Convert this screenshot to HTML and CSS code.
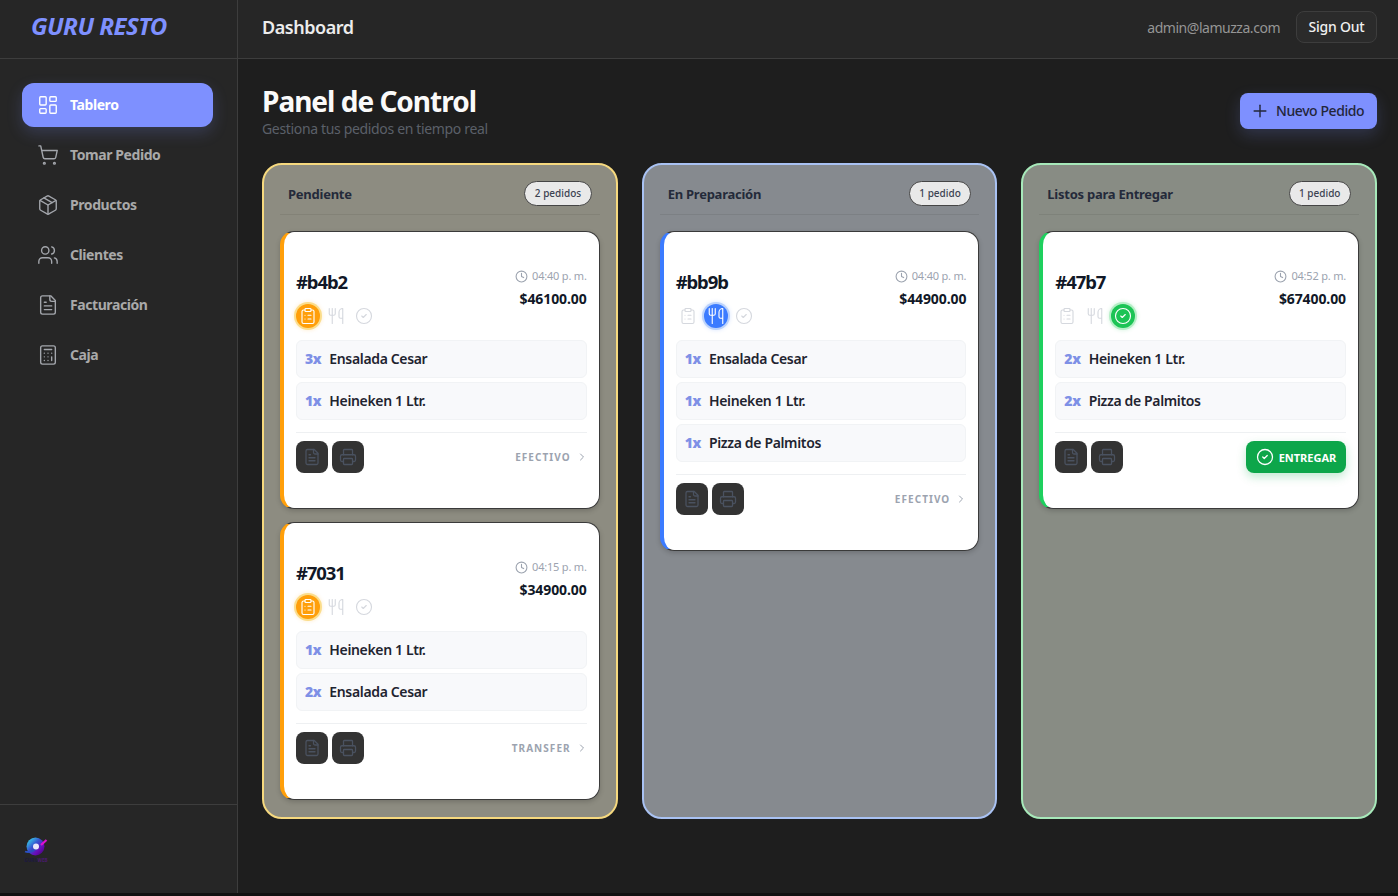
FILE: index.html
```html
<!DOCTYPE html>
<html lang="es">
<head>
    <meta charset="UTF-8">
    <meta name="viewport" content="width=device-width, initial-scale=1.0">
    <title>Guru Resto - Dashboard</title>
    <link rel="stylesheet" href="styles.css">
</head>
<body>

<!-- Iconos -->
<svg class="sprite" xmlns="http://www.w3.org/2000/svg">
    <symbol id="i-tablero" viewBox="0 0 24 24"><rect x="3" y="3" width="7" height="9" rx="1"/><rect x="14" y="3" width="7" height="5" rx="1"/><rect x="14" y="12" width="7" height="9" rx="1"/><rect x="3" y="16" width="7" height="5" rx="1"/></symbol>
    <symbol id="i-cart" viewBox="0 0 24 24"><circle cx="8" cy="21" r="1"/><circle cx="19" cy="21" r="1"/><path d="M2.05 2.05h2l2.66 12.42a2 2 0 0 0 2 1.58h9.78a2 2 0 0 0 1.95-1.57l1.65-7.43H5.12"/></symbol>
    <symbol id="i-package" viewBox="0 0 24 24"><path d="M11 21.73a2 2 0 0 0 2 0l7-4A2 2 0 0 0 21 16V8a2 2 0 0 0-1-1.73l-7-4a2 2 0 0 0-2 0l-7 4A2 2 0 0 0 3 8v8a2 2 0 0 0 1 1.73z"/><path d="M12 22V12"/><path d="M3.29 7 12 12l8.71-5"/><path d="m7.5 4.27 9 5.15"/></symbol>
    <symbol id="i-users" viewBox="0 0 24 24"><path d="M16 21v-2a4 4 0 0 0-4-4H6a4 4 0 0 0-4 4v2"/><circle cx="9" cy="7" r="4"/><path d="M22 21v-2a4 4 0 0 0-3-3.87"/><path d="M16 3.13a4 4 0 0 1 0 7.75"/></symbol>
    <symbol id="i-file" viewBox="0 0 24 24"><path d="M15 2H6a2 2 0 0 0-2 2v16a2 2 0 0 0 2 2h12a2 2 0 0 0 2-2V7Z"/><path d="M14 2v4a2 2 0 0 0 2 2h4"/><path d="M10 9H8"/><path d="M16 13H8"/><path d="M16 17H8"/></symbol>
    <symbol id="i-calc" viewBox="0 0 24 24"><rect x="4" y="2" width="16" height="20" rx="2"/><path d="M8 6h8"/><path d="M16 14v4"/><path d="M16 10h.01"/><path d="M12 10h.01"/><path d="M8 10h.01"/><path d="M12 14h.01"/><path d="M8 14h.01"/><path d="M12 18h.01"/><path d="M8 18h.01"/></symbol>
    <symbol id="i-clipboard" viewBox="0 0 24 24"><rect x="8" y="2" width="8" height="4" rx="1"/><path d="M16 4h2a2 2 0 0 1 2 2v14a2 2 0 0 1-2 2H6a2 2 0 0 1-2-2V6a2 2 0 0 1 2-2h2"/><path d="M12 11h4"/><path d="M12 16h4"/><path d="M8 11h.01"/><path d="M8 16h.01"/></symbol>
    <symbol id="i-utensils" viewBox="0 0 24 24"><path d="M3 2v7c0 1.1.9 2 2 2h4a2 2 0 0 0 2-2V2"/><path d="M7 2v20"/><path d="M21 15V2a5 5 0 0 0-5 5v6c0 1.1.9 2 2 2h3Zm0 0v7"/></symbol>
    <symbol id="i-check" viewBox="0 0 24 24"><circle cx="12" cy="12" r="10"/><path d="m9 12 2 2 4-4"/></symbol>
    <symbol id="i-clock" viewBox="0 0 24 24"><circle cx="12" cy="12" r="10"/><path d="M12 6v6l4 2"/></symbol>
    <symbol id="i-printer" viewBox="0 0 24 24"><path d="M6 18H4a2 2 0 0 1-2-2v-5a2 2 0 0 1 2-2h16a2 2 0 0 1 2 2v5a2 2 0 0 1-2 2h-2"/><path d="M6 9V3a1 1 0 0 1 1-1h10a1 1 0 0 1 1 1v6"/><rect x="6" y="14" width="12" height="8" rx="1"/></symbol>
    <symbol id="i-chevron" viewBox="0 0 24 24"><path d="m9 18 6-6-6-6"/></symbol>
    <symbol id="i-plus" viewBox="0 0 24 24"><path d="M5 12h14"/><path d="M12 5v14"/></symbol>
</svg>

<div class="app">
    <aside class="sidebar">
        <div class="brand">GURU RESTO</div>
        <nav class="nav">
            <a class="nav-item active"><svg class="icon"><use href="#i-tablero"/></svg>Tablero</a>
            <a class="nav-item"><svg class="icon"><use href="#i-cart"/></svg>Tomar Pedido</a>
            <a class="nav-item"><svg class="icon"><use href="#i-package"/></svg>Productos</a>
            <a class="nav-item"><svg class="icon"><use href="#i-users"/></svg>Clientes</a>
            <a class="nav-item"><svg class="icon"><use href="#i-file"/></svg>Facturación</a>
            <a class="nav-item"><svg class="icon"><use href="#i-calc"/></svg>Caja</a>
        </nav>
        <div class="sidebar-foot">
            <svg class="logo" viewBox="0 0 26 27" xmlns="http://www.w3.org/2000/svg">
                <defs>
                    <linearGradient id="planeta" x1="0.1" y1="0.1" x2="0.9" y2="0.9">
                        <stop offset="0" stop-color="#38d0e8"/>
                        <stop offset="0.4" stop-color="#3555d0"/>
                        <stop offset="0.75" stop-color="#6a0ab8"/>
                        <stop offset="1" stop-color="#4a0680"/>
                    </linearGradient>
                </defs>
                <circle cx="11.5" cy="10.5" r="9" fill="url(#planeta)"/>
                <path d="M1 15.5c4 1.5 9-.5 11-4" fill="none" stroke="#2a50c0" stroke-width="1.8"/>
                <path d="M17 9l5.5-5" stroke="#e010d0" stroke-width="2.2"/>
                <circle cx="12" cy="10.5" r="3" fill="#ebe6f8"/>
                <text class="logo-text" x="12" y="26" text-anchor="middle">GURU<tspan class="logo-web">WEB</tspan></text>
            </svg>
        </div>
    </aside>

    <div class="content">
        <header class="topbar">
            <div class="topbar-title">Dashboard</div>
            <div class="topbar-user">
                <span class="user-mail">admin@lamuzza.com</span>
                <button class="btn-signout">Sign Out</button>
            </div>
        </header>

        <main class="main">
            <div class="page-head">
                <div>
                    <h1>Panel de Control</h1>
                    <p>Gestiona tus pedidos en tiempo real</p>
                </div>
                <button class="btn-nuevo"><svg class="icon"><use href="#i-plus"/></svg>Nuevo Pedido</button>
            </div>

            <div class="board">
                <!-- Pendiente -->
                <section class="col col-pendiente">
                    <div class="col-head">
                        <h2>Pendiente</h2>
                        <span class="badge">2 pedidos</span>
                    </div>

                    <article class="card">
                        <div class="card-head">
                            <div>
                                <div class="card-id">#b4b2</div>
                                <div class="stages">
                                    <span class="stage on"><svg class="icon"><use href="#i-clipboard"/></svg></span>
                                    <span class="stage"><svg class="icon"><use href="#i-utensils"/></svg></span>
                                    <span class="stage"><svg class="icon"><use href="#i-check"/></svg></span>
                                </div>
                            </div>
                            <div class="card-meta">
                                <div class="time"><svg class="icon"><use href="#i-clock"/></svg>04:40 p. m.</div>
                                <div class="total">$46100.00</div>
                            </div>
                        </div>
                        <ul class="items">
                            <li><b>3x</b>Ensalada Cesar</li>
                            <li><b>1x</b>Heineken 1 Ltr.</li>
                        </ul>
                        <div class="card-foot">
                            <div class="tools">
                                <button class="tool"><svg class="icon"><use href="#i-file"/></svg></button>
                                <button class="tool"><svg class="icon"><use href="#i-printer"/></svg></button>
                            </div>
                            <div class="pay">EFECTIVO<svg class="icon"><use href="#i-chevron"/></svg></div>
                        </div>
                    </article>

                    <article class="card">
                        <div class="card-head">
                            <div>
                                <div class="card-id">#7031</div>
                                <div class="stages">
                                    <span class="stage on"><svg class="icon"><use href="#i-clipboard"/></svg></span>
                                    <span class="stage"><svg class="icon"><use href="#i-utensils"/></svg></span>
                                    <span class="stage"><svg class="icon"><use href="#i-check"/></svg></span>
                                </div>
                            </div>
                            <div class="card-meta">
                                <div class="time"><svg class="icon"><use href="#i-clock"/></svg>04:15 p. m.</div>
                                <div class="total">$34900.00</div>
                            </div>
                        </div>
                        <ul class="items">
                            <li><b>1x</b>Heineken 1 Ltr.</li>
                            <li><b>2x</b>Ensalada Cesar</li>
                        </ul>
                        <div class="card-foot">
                            <div class="tools">
                                <button class="tool"><svg class="icon"><use href="#i-file"/></svg></button>
                                <button class="tool"><svg class="icon"><use href="#i-printer"/></svg></button>
                            </div>
                            <div class="pay">TRANSFER<svg class="icon"><use href="#i-chevron"/></svg></div>
                        </div>
                    </article>
                </section>

                <!-- En Preparación -->
                <section class="col col-preparacion">
                    <div class="col-head">
                        <h2>En Preparación</h2>
                        <span class="badge">1 pedido</span>
                    </div>

                    <article class="card">
                        <div class="card-head">
                            <div>
                                <div class="card-id">#bb9b</div>
                                <div class="stages">
                                    <span class="stage"><svg class="icon"><use href="#i-clipboard"/></svg></span>
                                    <span class="stage on"><svg class="icon"><use href="#i-utensils"/></svg></span>
                                    <span class="stage"><svg class="icon"><use href="#i-check"/></svg></span>
                                </div>
                            </div>
                            <div class="card-meta">
                                <div class="time"><svg class="icon"><use href="#i-clock"/></svg>04:40 p. m.</div>
                                <div class="total">$44900.00</div>
                            </div>
                        </div>
                        <ul class="items">
                            <li><b>1x</b>Ensalada Cesar</li>
                            <li><b>1x</b>Heineken 1 Ltr.</li>
                            <li><b>1x</b>Pizza de Palmitos</li>
                        </ul>
                        <div class="card-foot">
                            <div class="tools">
                                <button class="tool"><svg class="icon"><use href="#i-file"/></svg></button>
                                <button class="tool"><svg class="icon"><use href="#i-printer"/></svg></button>
                            </div>
                            <div class="pay">EFECTIVO<svg class="icon"><use href="#i-chevron"/></svg></div>
                        </div>
                    </article>
                </section>

                <!-- Listos -->
                <section class="col col-listos">
                    <div class="col-head">
                        <h2>Listos para Entregar</h2>
                        <span class="badge">1 pedido</span>
                    </div>

                    <article class="card">
                        <div class="card-head">
                            <div>
                                <div class="card-id">#47b7</div>
                                <div class="stages">
                                    <span class="stage"><svg class="icon"><use href="#i-clipboard"/></svg></span>
                                    <span class="stage"><svg class="icon"><use href="#i-utensils"/></svg></span>
                                    <span class="stage on"><svg class="icon"><use href="#i-check"/></svg></span>
                                </div>
                            </div>
                            <div class="card-meta">
                                <div class="time"><svg class="icon"><use href="#i-clock"/></svg>04:52 p. m.</div>
                                <div class="total">$67400.00</div>
                            </div>
                        </div>
                        <ul class="items">
                            <li><b>2x</b>Heineken 1 Ltr.</li>
                            <li><b>2x</b>Pizza de Palmitos</li>
                        </ul>
                        <div class="card-foot">
                            <div class="tools">
                                <button class="tool"><svg class="icon"><use href="#i-file"/></svg></button>
                                <button class="tool"><svg class="icon"><use href="#i-printer"/></svg></button>
                            </div>
                            <button class="btn-entregar"><svg class="icon"><use href="#i-check"/></svg>ENTREGAR</button>
                        </div>
                    </article>
                </section>
            </div>
        </main>
    </div>
</div>

</body>
</html>
```

FILE: styles.css
```css
* {
    box-sizing: border-box;
}

html {
    background-color: #111;
}

body {
    margin: 0;
    font-family: "Noto Sans", "Open Sans", sans-serif;
    color: #1f2430;
}

.sprite {
    display: none;
}

.icon {
    width: 16px;
    height: 16px;
    fill: none;
    stroke: currentColor;
    stroke-width: 2;
    stroke-linecap: round;
    stroke-linejoin: round;
    flex-shrink: 0;
}

button {
    font-family: inherit;
    cursor: pointer;
}

.app {
    display: flex;
    height: 893px;
    overflow: hidden;
    background-color: #1e1e1e;
}

/* Barra lateral */
.sidebar {
    width: 238px;
    flex-shrink: 0;
    display: flex;
    flex-direction: column;
    background-color: #262626;
    border-right: 1px solid #3d3d3d;
}

.brand {
    height: 59px;
    padding: 10px 0 0 31px;
    border-bottom: 1px solid #3d3d3d;
    font-size: 24px;
    line-height: 32px;
    font-weight: 700;
    font-style: italic;
    letter-spacing: -0.55px;
    color: #7e90ff;
}

.nav {
    flex: 1;
    display: flex;
    flex-direction: column;
    gap: 6px;
    padding: 24px 24px 0 22px;
}

.nav-item {
    display: flex;
    align-items: center;
    gap: 11px;
    height: 44px;
    padding: 0 0 2px 15px;
    border-radius: 12px;
    font-size: 14px;
    font-weight: 700;
    letter-spacing: -0.42px;
    color: #a9a9a9;
}

.nav-item .icon {
    width: 22px;
    height: 22px;
    margin-top: 2px;
    stroke-width: 1.5;
    color: #a3a6ac;
}

.nav-item.active {
    background-color: #7e90ff;
    color: #fff;
    box-shadow: 0 6px 16px rgba(126, 144, 255, 0.2);
}

.nav-item.active .icon {
    color: #fff;
}

.sidebar-foot {
    height: 89px;
    padding: 31px 0 0 24px;
    border-top: 1px solid #3d3d3d;
}

.logo {
    display: block;
    width: 26px;
    height: 27px;
}

.logo-text {
    font-size: 4.6px;
    font-weight: 700;
    fill: #1c1840;
}

.logo-web {
    fill: #4a1a70;
}

/* Contenido */
.content {
    flex: 1;
    display: flex;
    flex-direction: column;
    min-width: 0;
}

.topbar {
    height: 59px;
    display: flex;
    align-items: center;
    justify-content: space-between;
    padding: 0 21px 4px 24px;
    background-color: #262626;
    border-bottom: 1px solid #3d3d3d;
}

.topbar-title {
    font-size: 18px;
    font-weight: 600;
    letter-spacing: -0.45px;
    color: #ececec;
}

.topbar-user {
    display: flex;
    align-items: center;
    gap: 16px;
}

.user-mail {
    font-size: 14px;
    letter-spacing: -0.47px;
    color: #959595;
}

.btn-signout {
    height: 32px;
    width: 81px;
    padding: 0 0 2px;
    background-color: #2b2b2b;
    border: 1px solid #3d3d3d;
    border-radius: 8px;
    font-size: 14px;
    font-weight: 500;
    letter-spacing: -0.2px;
    color: #f0f0f0;
}

.main {
    padding: 24px 21px 0 24px;
}

.page-head {
    display: flex;
    align-items: center;
    justify-content: space-between;
    margin-bottom: 25px;
}

.page-head h1 {
    margin: 0;
    font-size: 28px;
    line-height: 37px;
    font-weight: 700;
    letter-spacing: -1px;
    color: #fafafa;
}

.page-head p {
    margin: 0;
    font-size: 14px;
    line-height: 18px;
    letter-spacing: -0.34px;
    color: #5b6069;
}

.btn-nuevo {
    display: flex;
    align-items: center;
    gap: 6px;
    height: 36px;
    width: 137px;
    padding: 0 0 0 10px;
    background-color: #7e90ff;
    border: none;
    border-radius: 8px;
    font-size: 14px;
    font-weight: 500;
    letter-spacing: -0.42px;
    color: #23263a;
    box-shadow: 0 6px 16px rgba(126, 144, 255, 0.2);
}

.btn-nuevo .icon {
    width: 20px;
    height: 20px;
    stroke-width: 1.7;
}

/* Columnas */
.board {
    display: grid;
    grid-template-columns: repeat(3, 1fr);
    gap: 24px;
}

.col {
    display: flex;
    flex-direction: column;
    gap: 13px;
    padding: 16px 16px 17px;
    border: 2px solid;
    border-radius: 20px;
}

.col-pendiente {
    background-color: #8d8c81;
    border-color: #f6d97f;
}

.col-preparacion {
    background-color: #868a8f;
    border-color: #a9c2f3;
}

.col-listos {
    background-color: #888c84;
    border-color: #a7e9ba;
}

.col-head {
    display: flex;
    align-items: flex-start;
    justify-content: space-between;
    height: 34px;
    padding: 0 8px 8px;
    margin-bottom: 3px;
    border-bottom: 1px solid rgba(0, 0, 0, 0.07);
}

.col-head h2 {
    margin: 0;
    padding-top: 1px;
    font-size: 13px;
    line-height: 25px;
    font-weight: 700;
    letter-spacing: -0.25px;
    color: #242a3a;
}

.badge {
    height: 25px;
    padding: 0 9.5px;
    background-color: #e9e9e9;
    border: 1px solid #454545;
    border-radius: 13px;
    font-size: 10px;
    line-height: 22px;
    font-weight: 500;
    color: #3c4352;
}

/* Tarjetas */
.card {
    padding: 37px 12px 35px;
    background-color: #fff;
    border: 1px solid #3a3a3a;
    border-left: 4px solid #ff9f0a;
    border-radius: 14px;
    box-shadow: 0 2px 5px rgba(0, 0, 0, 0.18);
}

.col-preparacion .card {
    border-left-color: #3b7bff;
}

.col-listos .card {
    border-left-color: #1ed05e;
}

.card-head {
    display: flex;
    justify-content: space-between;
    margin-bottom: 12px;
}

.card-id {
    font-size: 18.5px;
    line-height: 26px;
    font-weight: 700;
    letter-spacing: -1.1px;
    color: #111827;
}

.stages {
    display: flex;
    gap: 4px;
    margin-top: 9px;
}

.stage {
    display: flex;
    align-items: center;
    justify-content: center;
    width: 24px;
    height: 24px;
    border-radius: 50%;
    color: #d5d8de;
}

.stage .icon {
    width: 18px;
    height: 18px;
    stroke-width: 1.5;
}

.col-pendiente .stage.on {
    background-color: #ff9f0a;
    box-shadow: 0 0 0 2px #fbdd8b, 0 0 4px 2px rgba(255, 159, 10, 0.2);
}

.col-preparacion .stage.on {
    background-color: #3b7bff;
    box-shadow: 0 0 0 2px #bcd3fb, 0 0 4px 2px rgba(59, 123, 255, 0.2);
}

.col-listos .stage.on {
    background-color: #1cc455;
    box-shadow: 0 0 0 2px #b5efc6, 0 0 4px 2px rgba(28, 196, 85, 0.2);
}

.stage.on {
    color: #fff;
}

.card-meta {
    text-align: right;
}

.time {
    display: flex;
    align-items: center;
    justify-content: flex-end;
    gap: 4px;
    font-size: 11px;
    line-height: 14px;
    letter-spacing: -0.2px;
    color: #9ca3af;
}

.time .icon {
    width: 13px;
    height: 13px;
}

.total {
    margin-top: 7px;
    font-size: 14px;
    line-height: 18px;
    font-weight: 700;
    letter-spacing: -0.1px;
    color: #111827;
}

.items {
    list-style: none;
    margin: 0;
    padding: 0;
    display: flex;
    flex-direction: column;
    gap: 4px;
}

.items li {
    display: flex;
    align-items: center;
    gap: 8px;
    height: 38px;
    padding: 0 0 2px 8px;
    background-color: #f8f9fb;
    border: 1px solid #f1f3f5;
    border-radius: 6px;
    font-size: 14px;
    font-weight: 600;
    letter-spacing: -0.35px;
    color: #1f2430;
}

.items b {
    color: #7e90e6;
}

.card-foot {
    display: flex;
    align-items: center;
    justify-content: space-between;
    margin-top: 12px;
    padding-top: 8px;
    border-top: 1px solid #eef0f2;
}

.tools {
    display: flex;
    gap: 4px;
}

.tool {
    display: flex;
    align-items: center;
    justify-content: center;
    width: 32px;
    height: 32px;
    padding: 0;
    background-color: #333;
    border: none;
    border-radius: 8px;
    color: #4a5260;
}

.tool .icon {
    width: 18px;
    height: 18px;
    stroke-width: 1.7;
}

.pay {
    display: flex;
    align-items: center;
    gap: 5px;
    margin-right: -1px;
    font-size: 10px;
    font-weight: 700;
    letter-spacing: 1.05px;
    color: #9ca3af;
}

.pay .icon {
    width: 12px;
    height: 12px;
}

.btn-entregar {
    display: flex;
    align-items: center;
    justify-content: center;
    gap: 5px;
    width: 100px;
    height: 32px;
    padding: 0;
    background-color: #0da64a;
    border: none;
    border-radius: 8px;
    font-size: 11px;
    font-weight: 700;
    color: #fff;
    box-shadow: 0 4px 10px rgba(13, 166, 74, 0.25);
}

.btn-entregar .icon {
    width: 18px;
    height: 18px;
    stroke-width: 1.7;
}
```
